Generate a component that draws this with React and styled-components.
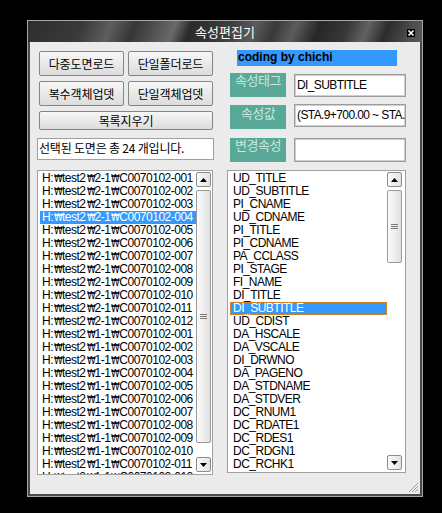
import styled, { createGlobalStyle } from "styled-components";

const GlobalStyle = createGlobalStyle`
  html, body {
    margin: 0;
    padding: 0;
    background: #000;
  }
  body {
    font-family: "Noto Sans CJK KR", "Liberation Sans", sans-serif;
  }
`;

const leftItems = [
  ...Array.from({ length: 12 }, (_, i) => `H:₩test2₩2-1₩C0070102-${String(i + 1).padStart(3, "0")}`),
  ...Array.from({ length: 12 }, (_, i) => `H:₩test2₩1-1₩C0070102-${String(i + 1).padStart(3, "0")}`),
];

const rightItems = [
  "UD_TITLE", "UD_SUBTITLE", "PI_CNAME", "UD_CDNAME", "PI_TITLE", "PI_CDNAME",
  "PA_CCLASS", "PI_STAGE", "FI_NAME", "DI_TITLE", "DI_SUBTITLE", "UD_CDIST",
  "DA_HSCALE", "DA_VSCALE", "DI_DRWNO", "DA_PAGENO", "DA_STDNAME", "DA_STDVER",
  "DC_RNUM1", "DC_RDATE1", "DC_RDES1", "DC_RDGN1", "DC_RCHK1",
];

const Desktop = styled.div`
  width: 442px;
  height: 513px;
  box-sizing: border-box;
  padding: 20px 0 0 27px;
  background: #000;
`;

const Window = styled.div`
  width: 396px;
  height: 477px;
  box-sizing: border-box;
  border: 1px solid #a6a6a6;
  background: #4a4a4a;
  padding: 0 2px 2px;
  display: flex;
  flex-direction: column;
`;

const TitleBar = styled.div`
  position: relative;
  flex: none;
  height: 21px;
  margin: 0 -2px;
  display: flex;
  align-items: center;
  justify-content: center;
  background: linear-gradient(
    112deg,
    #2e2e2e 0%,
    #3a3a3a 14%,
    #5e5e5e 21%,
    #363636 27%,
    #555 33%,
    #6a6a6a 37%,
    #2a2a2a 41%,
    #3c3c3c 50%,
    #5a5a5a 57%,
    #393939 62%,
    #5c5c5c 67%,
    #262626 73%,
    #383838 80%,
    #626262 85%,
    #2c2c2c 90%,
    #4c4c4c 96%,
    #5a5a5a 100%
  );
  color: #fff;
  font-size: 13px;
  line-height: 21px;
`;

const CloseBox = styled.div`
  position: absolute;
  right: 7px;
  top: 8px;
  width: 8px;
  height: 8px;
  display: flex;
`;

const Client = styled.div`
  position: relative;
  flex: 1;
  display: flex;
  background: #ebebeb;
  padding-left: 7px;
`;

const LeftCol = styled.div`
  width: 177px;
  display: flex;
  flex-direction: column;
  padding-top: 9px;
`;

const ButtonGrid = styled.div`
  display: grid;
  grid-template-columns: 85px 85px;
  grid-template-rows: 25px 25px 19px;
  gap: 5px 4px;
  margin-left: 2px;
`;

const Button = styled.button`
  grid-column: ${(p) => (p.$wide ? "1 / 3" : "auto")};
  margin: 0;
  padding: 0;
  border: 1px solid #858585;
  border-radius: 2px;
  background: linear-gradient(#f7f7f7, #dcdcdc);
  font-family: "Noto Sans CJK KR", sans-serif;
  font-size: 12px;
  line-height: 1;
  color: #000;
  letter-spacing: -0.1px;
`;

const StatusBox = styled.div`
  margin-top: 8px;
  height: 22px;
  box-sizing: border-box;
  border: 1px solid #a0a0a0;
  background: #fff;
  padding-left: 1px;
  font-size: 12px;
  line-height: 18px;
  color: #000;
  white-space: nowrap;
  letter-spacing: -0.2px;
`;

const ListBox = styled.div`
  margin-top: ${(p) => p.$top}px;
  width: ${(p) => p.$w}px;
  height: ${(p) => p.$h}px;
  box-sizing: border-box;
  border: 1px solid #a0a0a0;
  background: #fff;
  display: flex;
  overflow: hidden;
`;

const Items = styled.div`
  flex: 1;
  min-width: 0;
  overflow: hidden;
  padding: 1px 0 0 2px;
`;

const Item = styled.div`
  height: 13px;
  box-sizing: border-box;
  padding-left: ${(p) => p.$pad}px;
  font-family: "Liberation Sans", "DejaVu Sans", "Noto Sans CJK KR", sans-serif;
  font-size: 12px;
  line-height: 13px;
  letter-spacing: ${(p) => p.$ls}px;
  white-space: nowrap;
  overflow: hidden;
  color: ${(p) => (p.$sel ? "#fff" : "#000")};
  background: ${(p) => (p.$sel ? "#3399ff" : "transparent")};
  outline: ${(p) => (p.$focus ? "1px dotted #e08a2a" : "none")};
  outline-offset: -1px;
`;

const Won = styled.span`
  display: inline-block;
  width: 9px;
  text-align: center;
  font-family: "DejaVu Sans", sans-serif;
  font-size: 11px;
  letter-spacing: 0;
  transform: scaleX(0.8);
`;

const ScrollBar = styled.div`
  width: 15px;
  flex: none;
  display: flex;
  flex-direction: column;
  padding: 1px ${(p) => p.$right}px 2px 0;
  background: #fff;
`;

const ScrollButton = styled.div`
  height: 15px;
  box-sizing: border-box;
  border: 1px solid #8c8c8c;
  border-radius: 2px;
  background: linear-gradient(90deg, #fafafa, #e2e2e2);
  display: flex;
  align-items: center;
  justify-content: center;
`;

const Thumb = styled.div`
  margin-top: 3px;
  height: ${(p) => p.$h}px;
  box-sizing: border-box;
  border: 1px solid #9a9a9a;
  border-radius: 2px;
  background: linear-gradient(90deg, #fbfbfb, #e0e0e0);
  display: flex;
  align-items: center;
  justify-content: center;
`;

const Track = styled.div`
  flex: 1;
`;

const RightCol = styled.div`
  margin-left: 13px;
  width: 179px;
  display: flex;
  flex-direction: column;
  padding-top: 8px;
`;

const Banner = styled.div`
  margin-left: 10px;
  width: 160px;
  height: 16px;
  background: #3399ff;
  font-family: "Liberation Sans", sans-serif;
  font-weight: bold;
  font-size: 12px;
  line-height: 15px;
  color: #000;
  padding-left: 1px;
  box-sizing: border-box;
`;

const FieldRow = styled.div`
  margin-top: ${(p) => p.$top}px;
  display: grid;
  grid-template-columns: 56px 112px;
  column-gap: 8px;
  height: 24px;
  padding-left: 3px;
`;

const TagLabel = styled.div`
  background: #58a998;
  color: #cde6dd;
  font-size: 13px;
  line-height: 13px;
  letter-spacing: -0.5px;
  text-align: center;
  overflow: hidden;
  padding-top: ${(p) => p.$pad}px;
  box-sizing: border-box;
`;

const Field = styled.div`
  box-sizing: border-box;
  height: ${(p) => p.$h}px;
  margin-top: ${(p) => p.$off}px;
  border: 1px solid #9c9c9c;
  box-shadow: inset 0 0 0 1px #cfcfcf;
  background: #fff;
  padding-left: 2px;
  font-family: "Liberation Sans", sans-serif;
  font-size: 12px;
  line-height: 21px;
  letter-spacing: -0.6px;
  white-space: nowrap;
  overflow: hidden;
  color: #000;
`;

const Grip = styled.svg`
  position: absolute;
  right: 1px;
  bottom: 1px;
`;

const Arrow = ({ down }) => (
  <svg width="7" height="4" viewBox="0 0 7 4">
    <path d={down ? "M0 0H7L3.5 4Z" : "M0 4H7L3.5 0Z"} fill="#000" />
  </svg>
);

const GripLines = () => (
  <svg width="7" height="6" viewBox="0 0 7 6">
    <path d="M0 0.5H7M0 2.5H7M0 4.5H7" stroke="#7a7a7a" strokeWidth="1" />
  </svg>
);

const Scroll = ({ thumb, right }) => (
  <ScrollBar $right={right}>
    <ScrollButton>
      <Arrow />
    </ScrollButton>
    <Thumb $h={thumb}>
      <GripLines />
    </Thumb>
    <Track />
    <ScrollButton>
      <Arrow down />
    </ScrollButton>
  </ScrollBar>
);

const PathText = ({ text }) =>
  text.split("₩").map((part, i) => (
    <span key={i}>
      {i > 0 && <Won>₩</Won>}
      {part}
    </span>
  ));

export default function App() {
  return (
    <>
      <GlobalStyle />
      <Desktop>
        <Window>
          <TitleBar>
            속성편집기
            <CloseBox>
              <svg width="8" height="8" viewBox="0 0 8 8">
                <rect width="8" height="8" fill="#000" />
                <path d="M1.5 1.5L6.5 6.5M6.5 1.5L1.5 6.5" stroke="#fff" strokeWidth="1.6" />
              </svg>
            </CloseBox>
          </TitleBar>
          <Client>
            <LeftCol>
              <ButtonGrid>
                <Button>다중도면로드</Button>
                <Button>단일폴더로드</Button>
                <Button>복수객체업뎃</Button>
                <Button>단일객체업뎃</Button>
                <Button $wide>목록지우기</Button>
              </ButtonGrid>
              <StatusBox>선택된 도면은 총 24 개입니다.</StatusBox>
              <ListBox $top={10} $w={176} $h={305}>
                <Items>
                  {leftItems.map((t, i) => (
                    <Item key={t} $sel={i === 3} $pad={2} $ls={-0.5}>
                      <PathText text={t} />
                    </Item>
                  ))}
                </Items>
                <Scroll thumb={253} right={1} />
              </ListBox>
            </LeftCol>
            <RightCol>
              <Banner>coding by chichi</Banner>
              <FieldRow $top={7}>
                <TagLabel $pad={0}>속성태그</TagLabel>
                <Field $h={23} $off={1}>DI_SUBTITLE</Field>
              </FieldRow>
              <FieldRow $top={8}>
                <TagLabel $pad={1}>속성값</TagLabel>
                <Field $h={23} $off={-1}>(STA.9+700.00 ~ STA.9+800.00)</Field>
              </FieldRow>
              <FieldRow $top={9}>
                <TagLabel $pad={0}>변경속성</TagLabel>
                <Field $h={24} $off={0} />
              </FieldRow>
              <ListBox $top={8} $w={179} $h={303}>
                <Items>
                  {rightItems.map((t, i) => (
                    <Item key={t} $sel={i === 10} $focus={i === 10} $pad={3} $ls={-0.5}>
                      {t}
                    </Item>
                  ))}
                </Items>
                <Scroll thumb={73} right={3} />
              </ListBox>
            </RightCol>
            <Grip width="10" height="10" viewBox="0 0 10 10">
              <path d="M9 3L3 9M9 6L6 9M9 0L0 9" stroke="#9a9a9a" strokeWidth="1" />
            </Grip>
          </Client>
        </Window>
      </Desktop>
    </>
  );
}
